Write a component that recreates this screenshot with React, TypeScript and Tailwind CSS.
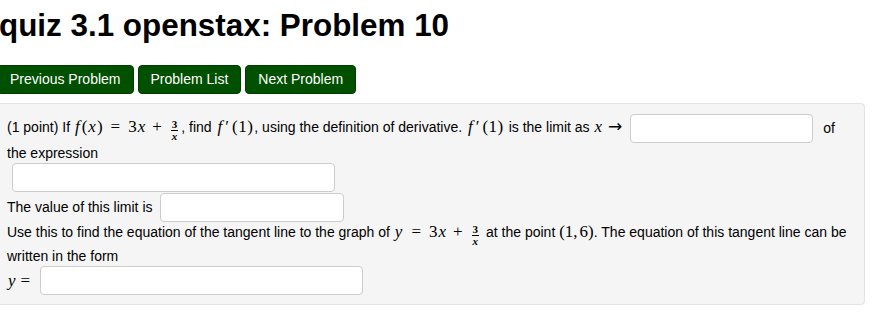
import React from "react";

const MF = "font-['Liberation_Serif','Times_New_Roman',serif] text-[17px] leading-none";

function V({ c, cls = "" }: { c: string; cls?: string }) {
  return <span className={`${MF} italic px-[1px] ${cls}`}>{c}</span>;
}
function N({ c, cls = "" }: { c: string; cls?: string }) {
  return <span className={`${MF} ${cls}`}>{c}</span>;
}
function Rel({ c }: { c: string }) {
  return <span className={`${MF} mx-[8px]`}>{c}</span>;
}
function Bin({ c }: { c: string }) {
  return <span className={`${MF} mx-[6px]`}>{c}</span>;
}
function Frac() {
  return (
    <span className="inline-flex flex-col items-center align-[4px] mx-[3px] font-['Liberation_Serif','Times_New_Roman',serif] text-[11px] leading-[9px] font-bold">
      <span className="px-[1px]">3</span>
      <span className="w-full border-t border-black mt-[1px]"></span>
      <span className="italic px-[1px] mt-[1px]">x</span>
    </span>
  );
}
function FPrime1() {
  return (
    <span className="whitespace-nowrap mx-[1px]">
      <V c="f" />
      <span className={`${MF} ml-[2px]`}>′</span>
      <N c="(1)" cls="ml-[3px] tracking-[0.5px]" />
    </span>
  );
}

function Input({ w, cls = "" }: { w: string; cls?: string }) {
  return (
    <span
      className={`inline-block h-[29px] bg-white border border-[#cccccc] rounded-[4px] align-middle ${w} ${cls}`}
    ></span>
  );
}

export default function App() {
  return (
    <div className="w-[887px] h-[313px] bg-white overflow-hidden font-['Liberation_Sans',Arial,sans-serif] text-black">
      <div className="ml-[-3px]">
        <h1 className="ml-[2px] mt-[8px] text-[31.4px] leading-[36px] font-bold whitespace-nowrap">
          quiz 3.1 openstax: Problem 10
        </h1>
        <div className="mt-[21px] flex gap-[4px]">
          {["Previous Problem", "Problem List", "Next Problem"].map((t) => (
            <div
              key={t}
              className="h-[29px] px-[12px] flex items-center bg-[#005000] border border-[#003d00] rounded-[4px] text-white text-[14px] whitespace-nowrap"
            >
              {t}
            </div>
          ))}
        </div>
        <div className="mt-[9px] w-[868px] bg-[#f5f5f5] border border-[#e3e3e3] rounded-[4px] pl-[9px] pt-[10px] pb-[9px] text-[14px]">
          <div className="h-[29px] flex items-center whitespace-nowrap">
            <span>
              (1 point) If <V c="f" cls="mr-[1px]" />
              <N c="(" />
              <V c="x" />
              <N c=")" />
              <Rel c="=" />
              <N c="3" />
              <V c="x" />
              <Bin c="+" />
              <Frac />, find <FPrime1 />, using the definition of derivative. <FPrime1 /> is the limit as{" "}
              <V c="x" />
              <span className="font-['DejaVu_Sans',sans-serif] text-[17px] leading-none ml-[5px]">→</span>
            </span>
            <Input w="w-[183px]" cls="ml-[8px]" />
            <span className="ml-[10px]">of</span>
          </div>
          <div className="h-[20px] leading-[20px]">the expression</div>
          <div className="h-[29px] flex items-center">
            <Input w="w-[323px]" cls="ml-[5px]" />
          </div>
          <div className="mt-[1px] h-[29px] flex items-center whitespace-nowrap">
            <span>The value of this limit is</span>
            <Input w="w-[184px]" cls="ml-[7px]" />
          </div>
          <div className="h-[24px] flex items-center whitespace-nowrap">
            <span>
              Use this to find the equation of the tangent line to the graph of <V c="y" />
              <Rel c="=" />
              <N c="3" />
              <V c="x" />
              <Bin c="+" />
              <Frac /> at the point <N c="(1," />
              <N c="6)" cls="ml-[2px]" />. The equation of this tangent line can be
            </span>
          </div>
          <div className="h-[20px] leading-[20px]">written in the form</div>
          <div className="h-[29px] flex items-center whitespace-nowrap">
            <V c="y" />
            <N c="=" cls="ml-[4px]" />
            <Input w="w-[323px]" cls="ml-[10px]" />
          </div>
        </div>
      </div>
    </div>
  );
}
